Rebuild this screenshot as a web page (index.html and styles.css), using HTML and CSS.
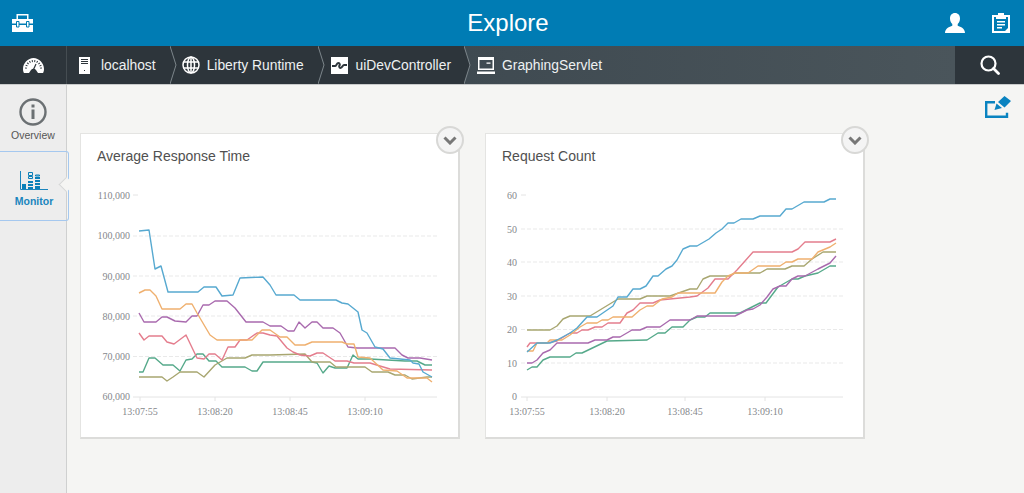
FILE: index.html
```html
<!DOCTYPE html>
<html lang="en">
<head>
    <meta charset="UTF-8">
    <meta name="viewport" content="width=device-width, initial-scale=1.0">
    <title>Explore</title>
    <link rel="stylesheet" href="styles.css">
</head>

<body>
    <header class="topbar">
        <div class="topbar-left">
            <svg class="icon" width="21" height="18" viewBox="0 0 21 18">
                <path fill="#fff" d="M4.500 5V0h12v5h-1.500V1.500H6V5zM0 5h21v4.500H0zM0 11h21v7H0z"/>
                <path fill="#fff" stroke="#007cb4" d="M4.500 7.500h2.500v5.500H4.500zM14.500 7.500h2.500v5.500h-2.500z"/>
            </svg>
        </div>
        <h1 class="topbar-title">Explore</h1>
        <div class="topbar-right">
            <svg class="icon" width="20" height="20" viewBox="0 0 20 20">
                <path fill="#fff" d="M10 0c3.200 0 5 2.300 5 5.500 0 2.400-1 4.300-2.300 5.500v1.700c3 1 7.300 2.800 7.300 7.300H0c0-4.500 4.300-6.300 7.300-7.300V11C6 9.800 5 7.900 5 5.500 5 2.300 6.800 0 10 0z"/>
            </svg>
            <svg class="icon" width="18" height="20" viewBox="0 0 18 20">
                <path fill="#fff" fill-rule="evenodd" d="M6 0h6v2h6v18H0V2h6zM2 4v14h11l3-3V4h-2v2H4V4zM5 8h8v1.500H5zM5 11h8v1.500H5zM5 14h5v1.500H5z"/>
            </svg>
        </div>
    </header>

    <nav class="crumbs">
        <div class="crumb-home">
            <svg class="icon" width="21" height="15" viewBox="0 0 21 15">
                <path fill="#fff" d="M0 11C0 5 5 0 10.500 0S21 5 21 11c0 1.700-.4 3-1 4h-5l-2-3a3 3 0 0 0-5 0l-2 3H1c-.6-1-1-2.300-1-4z"/>
                <path fill="none" stroke="#2d353b" stroke-width="2" stroke-dasharray="1 1.500" d="M3 10.500a7.500 7.500 0 0 1 15 0"/>
                <path fill="none" stroke="#2d353b" stroke-width="1.200" d="M10.500 11.500L13 6"/>
            </svg>
        </div>
        <a class="crumb crumb-first">
            <svg class="icon" width="11" height="17" viewBox="0 0 11 17">
                <path fill="#fff" fill-rule="evenodd" d="M0 0h11v17H0zM2 2v1h7V2zM2 4v1h7V4zM2 6v1h7V6zM5 13v1h1v-1z"/>
            </svg>
            <span>localhost</span>
        </a>
        <svg class="crumb-sep" width="7" height="38" viewBox="0 0 7 38"><path d="M0 0l6 19-6 19"/></svg>
        <a class="crumb">
            <svg class="icon globe" width="18" height="18" viewBox="0 0 18 18">
                <circle cx="9" cy="9" r="8"/>
                <ellipse cx="9" cy="9" rx="3.500" ry="8"/>
                <path d="M9 1v16M1.500 6h15M1.500 12h15"/>
            </svg>
            <span>Liberty Runtime</span>
        </a>
        <svg class="crumb-sep" width="7" height="38" viewBox="0 0 7 38"><path d="M0 0l6 19-6 19"/></svg>
        <a class="crumb crumb-controller">
            <svg class="icon" width="17" height="17" viewBox="0 0 17 17">
                <rect width="17" height="17" fill="#fff"/>
                <path fill="none" stroke="#2d353b" stroke-width="2" d="M1 9h3c1.500 0 1.500-3 3.500-3 1.500 0 1.500 2.500 1 2.500s-.5 2.500 1 2.500c2 0 2-3 3.500-3h3"/>
            </svg>
            <span>uiDevController</span>
        </a>
        <div class="crumb-current">
            <svg class="crumb-sep" width="7" height="38" viewBox="0 0 7 38"><path class="sep-fill" d="M0 0l6 19-6 19z"/><path d="M0 0l6 19-6 19"/></svg>
            <a class="crumb">
                <svg class="icon" width="18" height="17" viewBox="0 0 18 17">
                    <path fill="#fff" fill-rule="evenodd" d="M1 0h16v13H1zM2.500 3v8.500h13V3zM9.500 5.500h4v1.200h-4zM0 14.500h18V17H0z"/>
                </svg>
                <span>GraphingServlet</span>
            </a>
        </div>
        <div class="crumb-search">
            <svg class="icon" width="20" height="20" viewBox="0 0 20 20">
                <circle cx="8.500" cy="8.500" r="7" fill="none" stroke="#fff" stroke-width="2.200"/>
                <path d="M13.500 13.500l5 5" stroke="#fff" stroke-width="2.800" stroke-linecap="round"/>
            </svg>
        </div>
    </nav>

    <div class="main">
        <aside class="sidebar">
            <a class="side-item">
                <svg class="icon" width="28" height="28" viewBox="0 0 28 28">
                    <circle cx="14" cy="14" r="12.500" fill="none" stroke="#6b7073" stroke-width="2.400"/>
                    <rect x="12.500" y="6.500" width="3" height="3" fill="#6b7073"/>
                    <rect x="12.500" y="11.500" width="3" height="9.500" fill="#6b7073"/>
                </svg>
                <span>Overview</span>
            </a>
            <a class="side-item active">
                <svg class="icon" width="28" height="20" viewBox="0 0 28 20">
                    <path fill="none" stroke="#1a85bd" d="M.500 0v18.500H28"/>
                    <path fill="#0a7fb8" d="M2 13h4v5H2zM8 10h5v2H8zM8 13h5v2H8zM8 16h5v2H8zM15 6h5v2h-5zM15 9h5v2h-5zM15 12h5v2h-5zM15 15h5v3h-5z"/>
                    <path fill="none" stroke="#0a7fb8" d="M8.500 1.500h4v3h-4zM8.500 5.500h4v2h-4zM15.500 4h4v1h-4z"/>
                </svg>
                <span>Monitor</span>
            </a>
        </aside>

        <section class="content">
            <div class="toolbar">
                <svg class="icon" width="27" height="22" viewBox="0 0 27 22">
                    <path fill="none" stroke="#0a83c0" stroke-width="2.400" d="M10 6.200H1.200v14.600H22v-4"/>
                    <path fill="#0a83c0" d="M9.500 14l2-6.500 5.500 4.500zM13 6l6.500-6 6.500 5-6.500 6.500z"/>
                </svg>
            </div>

            <div class="cards">
                <article class="card">
                    <button class="card-toggle"><svg width="14" height="9" viewBox="0 0 14 9"><path d="M1.500 1.500L7 7l5.500-5.500"/></svg></button>
                    <h2 class="card-title">Average Response Time</h2>
                    <svg class="chart" width="377" height="250" viewBox="81 180 377 250">
                        <path class="tick" d="M133 195h5"/>
                        <path class="grid" d="M133 236h304M133 276h304M133 316h304M133 356.500h304"/>
                        <path class="axis" d="M133 397h304M140 397v4M215 397v4M290 397v4M365 397v4"/>
                        <g class="labels-y">
                            <text x="130" y="199">110,000</text>
                            <text x="130" y="239">100,000</text>
                            <text x="130" y="280">90,000</text>
                            <text x="130" y="320">80,000</text>
                            <text x="130" y="360">70,000</text>
                            <text x="130" y="400">60,000</text>
                        </g>
                        <g class="labels-x">
                            <text x="140" y="415">13:07:55</text>
                            <text x="215" y="415">13:08:20</text>
                            <text x="290" y="415">13:08:45</text>
                            <text x="365" y="415">13:09:10</text>
                        </g>
                        <polyline class="s-green" points="139,372 143,372 149,358 155,358 163,365 173,365 180,371 186,360 192,359 197,354 203,354 209,361 216,361 222,367 245,367 252,371 257,371 263,362 270,362 312,362 317,363 323,373 329,366 335,368 347,368 353,355 358,359 370,359 405,361 417,361 425,365 432,365"/>
                        <polyline class="s-olive" points="139,377 162,377 167,381 173,377 180,372 197,372 204,377 215,365 227,358 245,358 252,355 270,355 305,354 312,362 330,362 336,367 365,367 372,372 388,372 395,375 405,375 412,379 427,377 432,377"/>
                        <polyline class="s-pink" points="139,333 144,340 149,336 162,336 167,342 174,344 186,335 197,358 204,359 209,354 215,354 222,360 228,347 235,347 240,340 247,340 257,333 263,333 270,335 277,336 287,348 293,352 300,355 310,356 317,353 323,353 335,361 347,361 354,363 370,363 390,369 432,370"/>
                        <polyline class="s-purple" points="139,313 144,322 156,322 162,317 167,317 175,321 186,322 192,316 197,316 203,305 209,305 215,301 227,301 235,308 246,322 263,322 270,326 281,326 288,331 294,331 299,322 305,328 312,322 317,322 323,328 333,328 340,333 348,347 357,348 395,348 402,355 408,358 420,358 432,360"/>
                        <polyline class="s-orange" points="139,293 145,290 150,290 156,296 162,309 180,309 186,304 192,304 197,313 210,335 217,340 252,340 262,330 270,330 280,337 287,337 295,345 305,345 312,342 342,342 347,344 354,344 358,357 370,358 383,370 397,371 407,378 427,378 432,382"/>
                        <polyline class="s-blue" points="139,231 149,230 155,269 161,266 168,292 198,292 204,287 216,287 222,296 233,295 240,278 263,277 270,285 276,295 294,295 300,300 336,300 342,303 348,304 358,312 362,330 367,333 375,347 383,349 390,358 410,360 413,363 419,364 423,372 432,377"/>
                    </svg>
                </article>

                <article class="card">
                    <button class="card-toggle"><svg width="14" height="9" viewBox="0 0 14 9"><path d="M1.500 1.500L7 7l5.500-5.500"/></svg></button>
                    <h2 class="card-title">Request Count</h2>
                    <svg class="chart" width="377" height="250" viewBox="486 180 377 250">
                        <path class="tick" d="M521 195h5"/>
                        <path class="grid" d="M521 229h322M521 262h322M521 296h322M521 329.500h322M521 363h322"/>
                        <path class="axis" d="M521 397h322M527 397v4M607 397v4M685 397v4M765 397v4"/>
                        <g class="labels-y">
                            <text x="517" y="199">60</text>
                            <text x="517" y="233">50</text>
                            <text x="517" y="266">40</text>
                            <text x="517" y="300">30</text>
                            <text x="517" y="333">20</text>
                            <text x="517" y="367">10</text>
                            <text x="517" y="400">0</text>
                        </g>
                        <g class="labels-x">
                            <text x="527" y="415">13:07:55</text>
                            <text x="607" y="415">13:08:20</text>
                            <text x="685" y="415">13:08:45</text>
                            <text x="765" y="415">13:09:10</text>
                        </g>
                        <polyline class="s-green" points="527,370 532,367 537,367 543,360 550,357 570,357 576,353 582,353 607,341 647,340 658,333 665,333 672,327 683,327 690,320 697,317 705,317 710,313 740,313 760,303 766,303 772,295 778,287 785,283 792,279 798,279 805,276 818,273 830,266 836,266"/>
                        <polyline class="s-olive" points="527,330 550,330 557,326 563,319 570,316 590,316 618,299 640,299 647,296 670,296 690,289 697,289 703,279 710,276 730,276 735,273 760,273 767,269 785,269 792,266 804,266 812,259 823,252 836,252"/>
                        <polyline class="s-pink" points="527,347 530,343 547,343 557,341 570,333 577,333 582,330 588,330 595,327 602,327 608,323 620,323 627,313 633,310 640,303 653,303 660,300 670,299 690,297 697,296 708,288 715,279 728,279 737,270 753,252 792,252 798,249 805,242 830,242 836,239"/>
                        <polyline class="s-orange" points="527,351 533,351 537,343 547,343 550,340 562,340 570,335 580,327 587,323 597,323 602,320 608,320 613,317 632,317 640,310 647,306 653,306 662,299 672,297 678,293 715,293 722,282 728,276 735,273 748,273 758,266 780,266 786,262 792,262 798,259 812,259 818,252 830,247 836,243"/>
                        <polyline class="s-purple" points="527,363 532,363 537,360 543,353 550,350 557,343 588,343 595,340 607,340 613,337 620,337 632,330 640,330 647,327 660,327 670,320 690,320 697,316 735,316 747,310 753,309 760,305 767,297 773,289 780,286 786,286 792,279 798,276 805,276 818,269 830,263 836,256"/>
                        <polyline class="s-blue" points="527,352 537,343 550,343 557,340 570,333 577,328 587,317 597,317 613,306 618,297 627,297 633,289 640,289 646,286 653,276 658,276 666,269 672,266 677,260 683,249 690,246 697,246 709,239 716,233 722,229 728,223 734,223 741,219 753,219 760,216 780,216 786,209 792,209 804,202 824,202 830,199 836,199"/>
                    </svg>
                </article>
            </div>
        </section>
    </div>
</body>

</html>
```

FILE: styles.css
```css
html, body {
    height: 100%;
}

body {
    margin: 0;
    display: flex;
    flex-direction: column;
    overflow: hidden;
    font-family: 'Liberation Sans', Arial, sans-serif;
    background: #f5f5f3;
    color: #444;
}

.icon {
    display: block;
    flex: none;
}

/* top bar */
.topbar {
    flex: none;
    height: 46px;
    display: flex;
    align-items: center;
    background: #007cb4;
    color: #fff;
}

.topbar-left {
    width: 71px;
    padding-left: 12px;
    box-sizing: border-box;
}

.topbar-title {
    flex: 1;
    margin: 0;
    font-size: 24px;
    font-weight: normal;
    text-align: center;
}

.topbar-right {
    width: 79px;
    display: flex;
    align-items: center;
    gap: 27px;
}

/* breadcrumb */
.crumbs {
    flex: none;
    height: 38px;
    display: flex;
    align-items: center;
    background: #2d353b;
    color: #eef1f2;
    font-size: 13.850px;
}

.crumb-home {
    width: 67px;
    height: 100%;
    display: flex;
    align-items: center;
    justify-content: center;
    border-right: 1px solid #454d52;
    box-sizing: border-box;
}

.crumb {
    height: 100%;
    display: flex;
    align-items: center;
    gap: 7px;
    margin: 0 14px 0 5px;
    white-space: nowrap;
}

.crumb-first {
    margin-left: 12px;
    gap: 11px;
}

.crumb-controller {
    margin: 0 13px 0 6px;
    gap: 8px;
}

.crumb-current .crumb {
    margin-left: 6px;
}

.crumb-sep {
    flex: none;
    display: block;
}

.crumb-sep path {
    fill: none;
    stroke: #7d868b;
}

.crumb-sep .sep-fill {
    fill: #2d353b;
    stroke: none;
}

.crumb-current {
    flex: 1;
    height: 100%;
    display: flex;
    align-items: center;
    background: linear-gradient(90deg, #3f4a51, #4a555b);
}

.crumb-search {
    width: 69px;
    height: 100%;
    display: flex;
    align-items: center;
    justify-content: center;
    background: #2d353b;
}

.globe {
    fill: none;
    stroke: #fff;
    stroke-width: 1.500;
}

/* sidebar */
.main {
    flex: 1;
    display: flex;
    min-height: 0;
    border-top: 1px solid #c9cbcb;
}

.sidebar {
    width: 67px;
    flex: none;
    box-sizing: border-box;
    border-right: 1px solid #cfd0d0;
    background: #ededed;
}

.side-item {
    height: 66px;
    display: flex;
    flex-direction: column;
    align-items: center;
    padding-top: 13px;
    box-sizing: border-box;
    gap: 3px;
    font-size: 10.500px;
    color: #555;
}

.side-item.active {
    position: relative;
    height: 70px;
    width: 69px;
    padding-top: 19px;
    gap: 4px;
    border: 1px solid #a5c8ef;
    border-left: 0;
    border-radius: 0 3px 3px 0;
    font-weight: bold;
    color: #1a85bd;
}

.side-item.active::after {
    content: "";
    position: absolute;
    right: -1px;
    top: 27px;
    width: 10px;
    height: 10px;
    background: #f5f5f3;
    border-left: 1px solid #d5d7d7;
    border-bottom: 1px solid #d5d7d7;
    transform: rotate(45deg) translate(2px, -2px);
}

/* content */
.content {
    flex: 1;
    padding: 11px 12px 0 13px;
    min-width: 0;
}

.toolbar {
    display: flex;
    justify-content: flex-end;
    height: 37px;
}

.cards {
    display: flex;
    gap: 25px;
}

.card {
    position: relative;
    width: 380px;
    box-sizing: border-box;
    padding-bottom: 7px;
    background: #fff;
    border: 1px solid #e4e4e2;
    border-right: 2px solid #dcdcda;
    border-bottom: 2px solid #dcdcda;
}

.card-title {
    margin: 0;
    padding: 12px 16px 14px;
    font-size: 14px;
    line-height: 20px;
    font-weight: normal;
    color: #505050;
}

.card-toggle {
    position: absolute;
    top: -8px;
    right: -6px;
    width: 28px;
    height: 28px;
    padding: 0;
    display: flex;
    align-items: center;
    justify-content: center;
    background: #f4f4f4;
    border: 2px solid #d8d8d6;
    border-radius: 50%;
}

.card-toggle path {
    fill: none;
    stroke: #777;
    stroke-width: 3;
}

/* charts */
.chart {
    display: block;
}

.chart text {
    font-family: 'Liberation Serif', 'Times New Roman', serif;
    font-size: 10px;
    fill: #85888c;
}

.labels-y text {
    text-anchor: end;
}

.labels-x text {
    text-anchor: middle;
}

.grid {
    fill: none;
    stroke: #e9e9e9;
    stroke-dasharray: 4 2;
}

.axis, .tick {
    fill: none;
    stroke: #e4e4e4;
}

.chart polyline {
    fill: none;
    stroke-width: 1.400;
    stroke-linejoin: round;
}

.s-blue { stroke: #57a9d0; }
.s-orange { stroke: #efb06f; }
.s-purple { stroke: #a96aae; }
.s-pink { stroke: #e47d8d; }
.s-green { stroke: #55a98a; }
.s-olive { stroke: #a8a670; }
```
